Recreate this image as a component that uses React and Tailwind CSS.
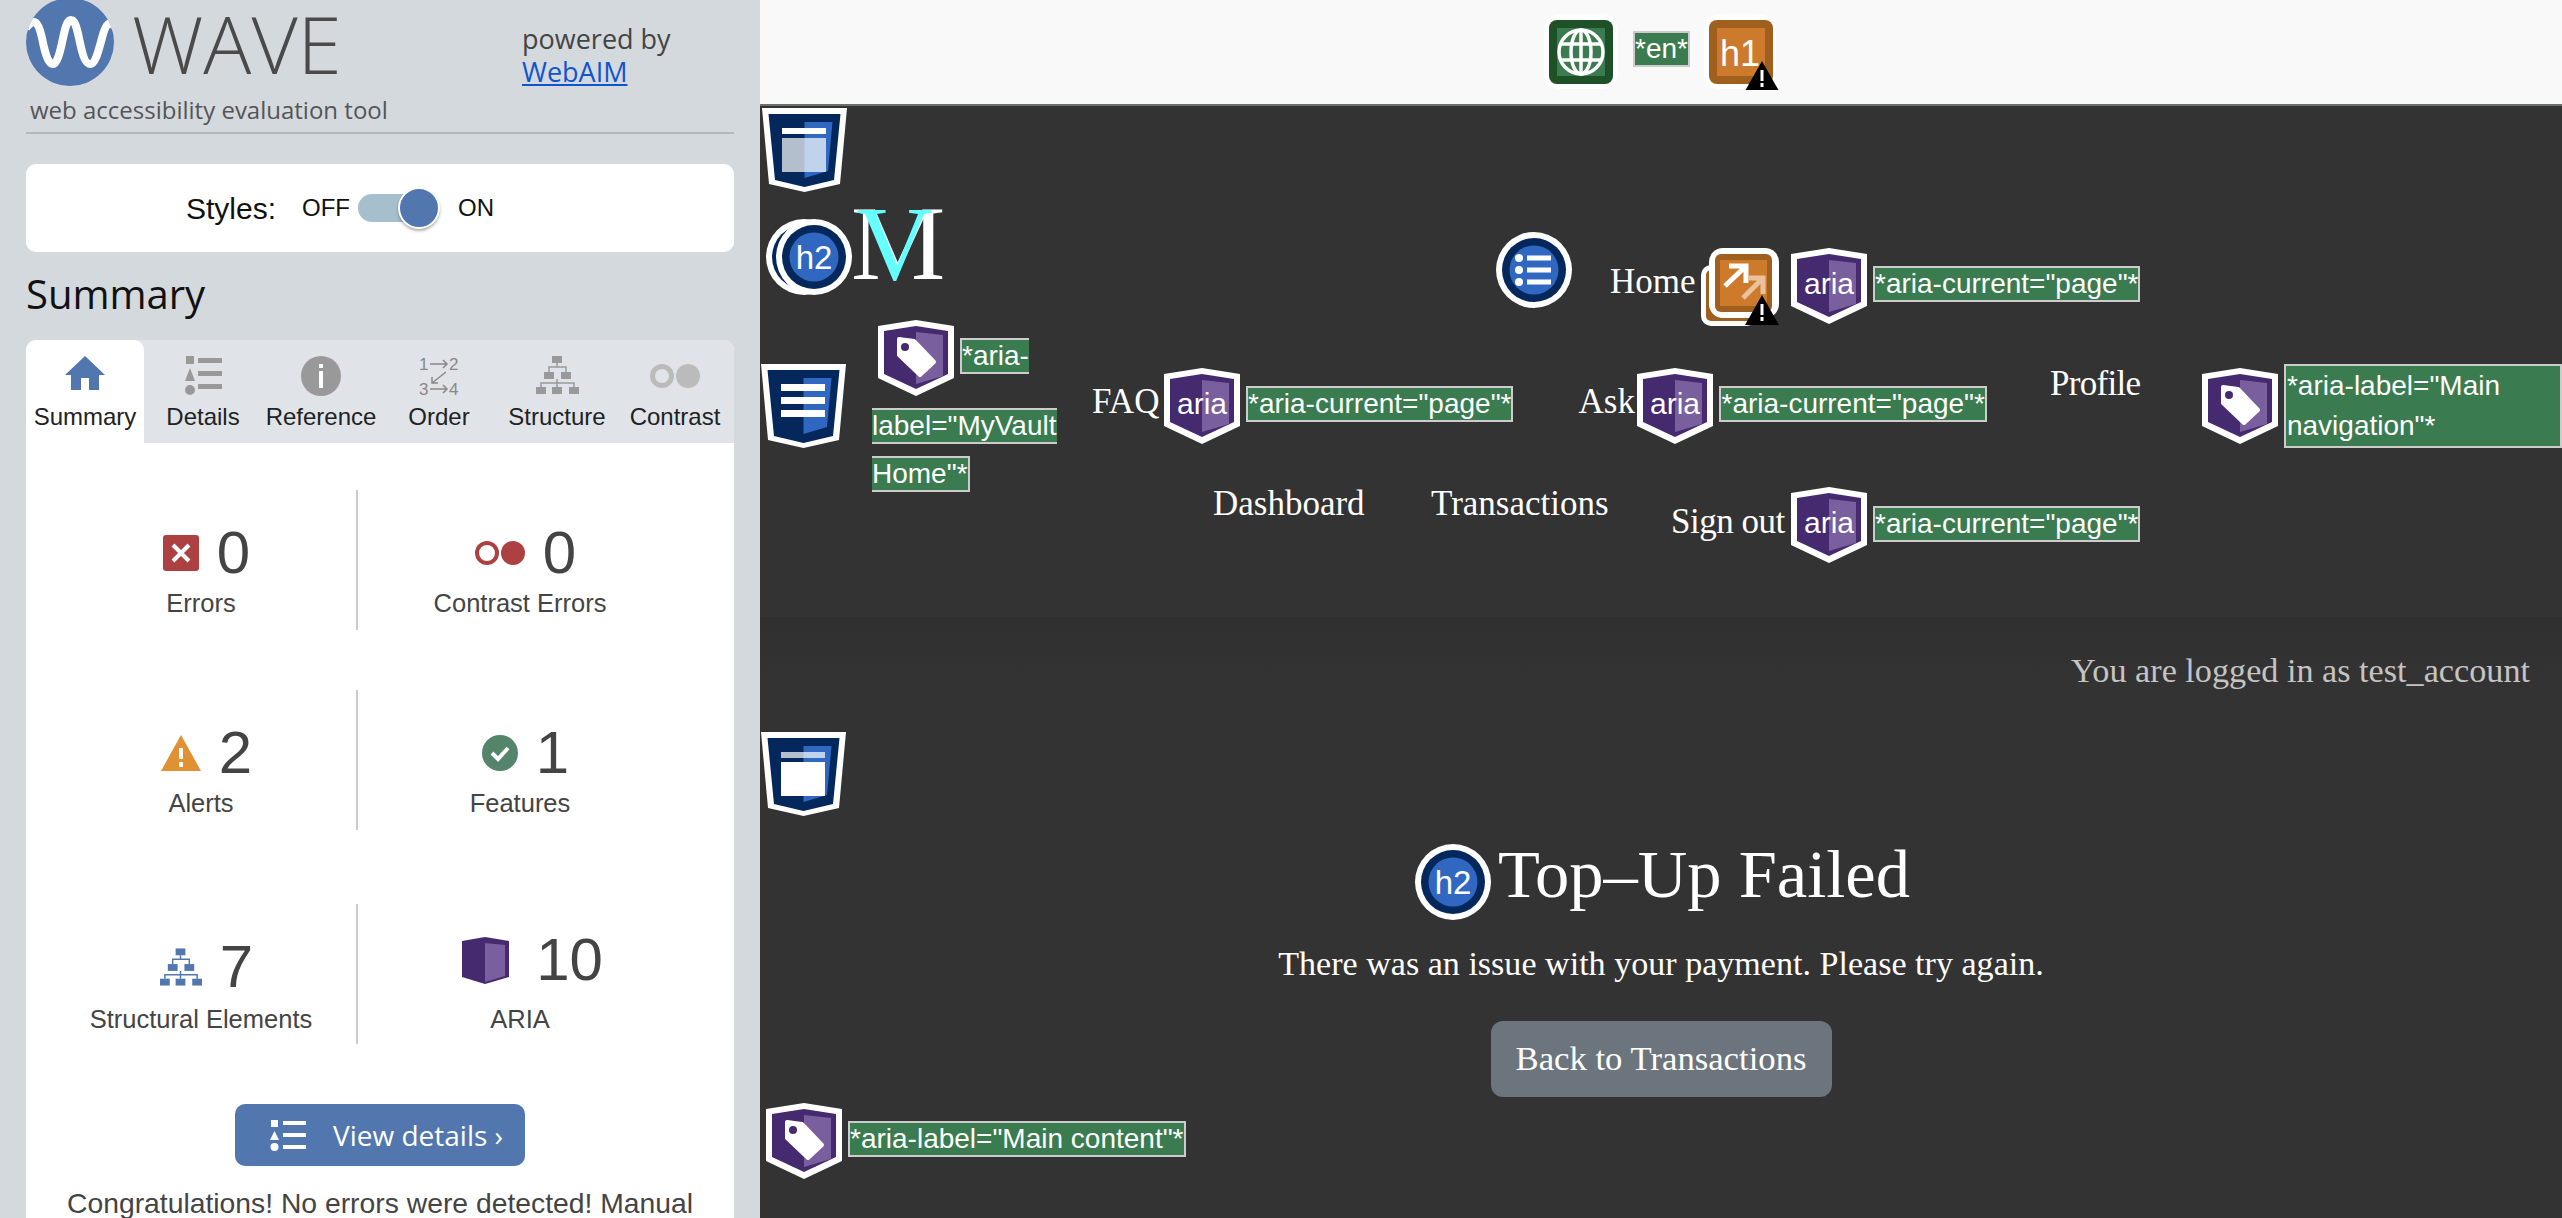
import React from 'react'

const sans = "font-['Liberation_Sans',sans-serif]"
const open = "font-['Open_Sans',sans-serif]"

function WaveLogo() {
  return (
    <svg width="88" height="88" viewBox="0 0 88 88" className="shrink-0 -mt-[2px]">
      <defs>
        <clipPath id="logoClip"><circle cx="44" cy="44" r="44" /></clipPath>
      </defs>
      <circle cx="44" cy="44" r="44" fill="#5177ae" />
      <path d="M0 30 C8 20 12 22 16 40 C20 60 23 66 27 66 C31 66 34 55 37 40 C40 26 42 22 45 22 C48 22 50 26 53 40 C56 55 59 66 64 66 C69 66 72 55 76 40 C80 24 84 22 90 30" fill="none" stroke="#fff" strokeWidth="8" clipPath="url(#logoClip)" />
    </svg>
  )
}

function Warn({ x = 41, y = 47 }) {
  return (
    <g transform={`translate(${x} ${y})`}>
      <path d="M17 0 L34 30 H0 Z" fill="#000" />
      <rect x="15.5" y="9" width="3" height="11" fill="#fff" />
      <rect x="15.5" y="22" width="3" height="4" fill="#fff" />
    </g>
  )
}

function Landmark({ children, className = '' }) {
  return (
    <svg width="85" height="84" viewBox="0 0 85 84" className={`shrink-0 ${className}`}>
      <path d="M0 0 H85 L78 76 L42.5 84 L7 76 Z" fill="#fff" />
      <path d="M6.500 6 H78.500 L72 72 L42.500 79 L13 72 Z" fill="#05285c" />
      <path d="M42.500 14 H70.500 L66 63 L42.500 70 Z" fill="#3068c1" />
      {children}
    </svg>
  )
}

function HeadingBadge({ x = 0 }) {
  return (
    <g transform={`translate(${x} 0)`}>
      <circle cx="38" cy="38" r="38" fill="#fff" />
      <circle cx="38" cy="38" r="32" fill="#05285c" />
      <circle cx="38" cy="38" r="24.500" fill="#3068c1" />
      <text x="38" y="50" textAnchor="middle" fontFamily="Liberation Sans" fontSize="33" fill="#fff">h2</text>
    </g>
  )
}

function H2Icon({ className = '' }) {
  return (
    <svg width="76" height="76" viewBox="0 0 76 76" className={`shrink-0 ${className}`}><HeadingBadge /></svg>
  )
}

function H2Stack({ className = '' }) {
  return (
    <svg width="87" height="76" viewBox="0 0 87 76" className={`shrink-0 ${className}`}>
      <HeadingBadge />
      <HeadingBadge x={10} />
    </svg>
  )
}

function ListIcon({ className = '' }) {
  return (
    <svg width="76" height="76" viewBox="0 0 76 76" className={`shrink-0 ${className}`}>
      <circle cx="38" cy="38" r="38" fill="#fff" />
      <circle cx="38" cy="38" r="32" fill="#05285c" />
      <circle cx="38" cy="38" r="24.500" fill="#3068c1" />
      <circle cx="23" cy="26" r="4" fill="#fff" />
      <circle cx="23" cy="38" r="4" fill="#fff" />
      <circle cx="23" cy="50" r="4" fill="#fff" />
      <rect x="31" y="23.500" width="24" height="5" fill="#fff" />
      <rect x="31" y="35.500" width="24" height="5" fill="#fff" />
      <rect x="31" y="47.500" width="24" height="5" fill="#fff" />
    </svg>
  )
}

function AriaShell({ children, className = '' }) {
  return (
    <svg width="76" height="76" viewBox="0 0 76 76" className={`shrink-0 ${className}`}>
      <path d="M0 6 L38 0 L76 6 V58 L38 76 L0 58 Z" fill="#fff" />
      <path d="M6 11 L38 6 L70 11 V54 L38 69 L6 54 Z" fill="#452a6f" />
      <path d="M38 12 L65 15 V56 L38 64 Z" fill="#7a5f9e" />
      {children}
    </svg>
  )
}

function AriaIcon({ className }) {
  return (
    <AriaShell className={className}>
      <text x="38" y="46" textAnchor="middle" fontFamily="Liberation Sans" fontSize="30" fill="#fff">aria</text>
    </AriaShell>
  )
}

function AriaTag({ className }) {
  return (
    <AriaShell className={className}>
      <path d="M21 19 L36 21 L56 42 L42 55 L21 35 Z" fill="#fff" stroke="#fff" strokeWidth="4" strokeLinejoin="round" />
      <circle cx="27" cy="27" r="4" fill="#452a6f" />
    </AriaShell>
  )
}

function LinkIcon({ className = '' }) {
  return (
    <svg width="78" height="78" viewBox="0 0 78 78" className={`shrink-0 ${className}`}>
      <rect x="0" y="17" width="56" height="61" rx="10" fill="#fff" />
      <rect x="5" y="22" width="50" height="51" rx="5" fill="#9f5f1f" />
      <rect x="8" y="0" width="70" height="70" rx="14" fill="#fff" />
      <rect x="14" y="6" width="57" height="58" rx="6" fill="#9f5f1f" />
      <rect x="19" y="12" width="47" height="46" fill="#cd7a2c" />
      <path d="M28 18 H45 V35 M45 18 L24 38" fill="none" stroke="#fff" strokeWidth="5" />
      <path d="M47 30 H62 V46 M62 30 L42 50" fill="none" stroke="#e9c29c" strokeWidth="5" />
      <Warn x={44} y={47} />
    </svg>
  )
}

function Tag({ children, className = '' }) {
  return (
    <span className={`block shrink-0 whitespace-nowrap border-2 border-[#ccc] bg-[#3a7b4f] text-[28px] leading-[32px] text-white ${sans} ${className}`}>
      {children}
    </span>
  )
}

function NavText({ children, className = '' }) {
  return (
    <span className={`block shrink-0 whitespace-nowrap text-[35px] leading-[40px] text-white ${className}`}>{children}</span>
  )
}

function TabIcon({ name }) {
  if (name === 'home') {
    return (
      <svg width="40" height="34" viewBox="0 0 40 34" className="mt-[16px]">
        <path d="M20 0 L40 19 H34 V34 H24 V22 H16 V34 H6 V19 H0 Z" fill="#5177ae" />
      </svg>
    )
  }
  if (name === 'details') {
    return (
      <svg width="37" height="40" viewBox="0 0 37 40" className="mt-[16px]">
        <rect x="1" y="0" width="8" height="8" fill="#999" />
        <path d="M5 12 L10 25 H0 Z" fill="#999" />
        <circle cx="5" cy="34" r="5" fill="#999" />
        <rect x="13" y="2" width="24" height="5" fill="#999" />
        <rect x="13" y="15" width="24" height="5" fill="#999" />
        <rect x="13" y="28" width="24" height="5" fill="#999" />
      </svg>
    )
  }
  if (name === 'reference') {
    return (
      <svg width="40" height="40" viewBox="0 0 40 40" className="mt-[16px]">
        <circle cx="20" cy="20" r="20" fill="#999" />
        <rect x="18" y="8" width="4" height="4" fill="#fff" />
        <rect x="18" y="15" width="4" height="17" fill="#fff" />
      </svg>
    )
  }
  if (name === 'order') {
    return (
      <svg width="40" height="40" viewBox="0 0 40 40" className="mt-[16px]">
        <g fontFamily="Liberation Sans" fontSize="17" fill="#888">
          <text x="0" y="14">1</text>
          <text x="30" y="14">2</text>
          <text x="0" y="39">3</text>
          <text x="30" y="39">4</text>
        </g>
        <path d="M11 8 H28 M24 4 L28 8 L24 12 M11 33 H28 M24 29 L28 33 L24 37 M27 16 L13 27 M13 21 V27 H19" fill="none" stroke="#888" strokeWidth="1.500" />
      </svg>
    )
  }
  if (name === 'structure') {
    return <StructureTree color="#999" className="mt-[16px]" width={43} height={38} />
  }
  return (
    <svg width="50" height="24" viewBox="0 0 50 24" className="mt-[24px]">
      <circle cx="12" cy="12" r="9.500" fill="none" stroke="#bbb" strokeWidth="5" />
      <circle cx="38" cy="12" r="12" fill="#bbb" />
    </svg>
  )
}

function StructureTree({ color, className = '', width, height }) {
  return (
    <svg width={width} height={height} viewBox="0 0 43 38" className={className}>
      <rect x="16" y="0" width="10" height="7" fill={color} />
      <rect x="8" y="16" width="10" height="7" fill={color} />
      <rect x="25" y="16" width="10" height="7" fill={color} />
      <rect x="0" y="31" width="10" height="7" fill={color} />
      <rect x="16" y="31" width="10" height="7" fill={color} />
      <rect x="33" y="31" width="10" height="7" fill={color} />
      <path d="M21 7 V11 M13 16 V11 H30 V16 M21 23 V27 M5 31 V27 H38 V31 M21 27 V31" fill="none" stroke={color} strokeWidth="1.500" />
    </svg>
  )
}

function Stat({ icon, n, label, gap = 'ml-[18px]', top = 'mt-[33px]', under = 'mt-[5px]', shift = 'ml-[11px]', className = '' }) {
  return (
    <div className={`flex h-[140px] flex-col items-center ${className}`}>
      <div className={`flex h-[60px] items-center ${top} ${shift}`}>
        {icon}
        <span className={`${gap} text-[60px] leading-[60px] text-[#444]`}>{n}</span>
      </div>
      <span className={`${under} whitespace-nowrap text-[25.500px] leading-[30px] text-[#444]`}>{label}</span>
    </div>
  )
}

const tabs = [
  { id: 'home', label: 'Summary' },
  { id: 'details', label: 'Details' },
  { id: 'reference', label: 'Reference' },
  { id: 'order', label: 'Order' },
  { id: 'structure', label: 'Structure' },
  { id: 'contrast', label: 'Contrast' },
]

function Sidebar() {
  return (
    <aside className={`flex h-full w-[760px] shrink-0 flex-col overflow-hidden bg-[#d4d9de] px-[26px] ${sans}`}>
      <div className="h-[134px] shrink-0 border-b-[2px] border-[#b3b8bd]">
        <div className="flex h-[86px]">
          <WaveLogo />
          <span className={`ml-[18px] w-[390px] text-[80px] leading-[86px] font-light text-[#4a4a4a] ${open}`}>WAVE</span>
          <div className={`pt-[22px] text-[27px] leading-[33px] text-[#444] ${open}`}>
            <div>powered by</div>
            <a href="#" className="text-[#1155cc] underline">WebAIM</a>
          </div>
        </div>
        <div className={`pl-[4px] pt-[8px] text-[24px] leading-[32px] text-[#555] ${open}`}>web accessibility evaluation tool</div>
      </div>

      <div className="mt-[30px] flex h-[88px] shrink-0 items-center rounded-[10px] bg-white pl-[160px] text-[#111]">
        <span className="text-[30px]">Styles:</span>
        <span className="ml-[26px] text-[24px]">OFF</span>
        <div className="ml-[8px] flex h-[40px] w-[82px] items-center">
          <div className="h-[28px] w-[60px] rounded-l-full bg-[#a5c0cc]" />
          <div className="-ml-[18px] h-[42px] w-[42px] shrink-0 rounded-full border-2 border-white bg-[#5177ae] shadow-[0_2px_3px_rgba(0,0,0,0.3)]" />
        </div>
        <span className="ml-[18px] text-[24px]">ON</span>
      </div>

      <h2 className={`mt-[16px] shrink-0 text-[40px] leading-[52px] text-[#111] ${open}`}>Summary</h2>

      <div className="mt-[20px] flex flex-1 shrink-0 flex-col rounded-t-[10px] bg-white">
        <div className="flex h-[103px] shrink-0 rounded-t-[10px] bg-[#e0e4e9]">
          {tabs.map((t, i) => (
            <div key={t.id} className={`flex w-[118px] flex-col items-center ${i === 0 ? 'rounded-t-[10px] bg-white' : ''}`}>
              <div className="h-[62px]"><TabIcon name={t.id} /></div>
              <span className="text-[24px] leading-[30px] text-[#222]">{t.label}</span>
            </div>
          ))}
        </div>

        <div className="ml-[20px] mt-[47px] shrink-0">
          <div className="flex">
            <Stat className="w-[312px] border-r-2 border-[#ccc]" n="0" label="Errors" icon={
              <svg width="36" height="36" viewBox="0 0 36 36">
                <rect width="36" height="36" rx="3" fill="#ad4040" />
                <path d="M10 10 L26 26 M26 10 L10 26" stroke="#fff" strokeWidth="4" />
              </svg>
            } />
            <Stat className="w-[324px]" n="0" label="Contrast Errors" icon={
              <svg width="50" height="24" viewBox="0 0 50 24">
                <circle cx="12" cy="12" r="10" fill="none" stroke="#ad4040" strokeWidth="4" />
                <circle cx="38" cy="12" r="12" fill="#ad4040" />
              </svg>
            } />
          </div>
          <div className="mt-[60px] flex">
            <Stat className="w-[312px] border-r-2 border-[#ccc]" n="2" label="Alerts" icon={
              <svg width="40" height="36" viewBox="0 0 40 36">
                <path d="M20 0 L40 36 H0 Z" fill="#df9133" />
                <rect x="18" y="13" width="4" height="11" fill="#fff" />
                <rect x="18" y="27" width="4" height="5" fill="#fff" />
              </svg>
            } />
            <Stat className="w-[324px]" n="1" label="Features" icon={
              <svg width="36" height="36" viewBox="0 0 36 36">
                <circle cx="18" cy="18" r="18" fill="#54846a" />
                <path d="M10 18 L16 24 L26 13" fill="none" stroke="#fff" strokeWidth="4" />
              </svg>
            } />
          </div>
          <div className="mt-[74px] flex">
            <Stat className="w-[312px] border-r-2 border-[#ccc]" n="7" label="Structural Elements" under="mt-[7px]" icon={<StructureTree color="#5177ae" width={42} height={38} />} />
            <Stat className="w-[324px]" n="10" gap="ml-[27px]" top="mt-[26px]" under="mt-[14px]" shift="ml-[25px]" label="ARIA" icon={
              <svg width="47" height="47" viewBox="0 0 47 47">
                <path d="M0 4 L23 0 L47 4 V40 L23 47 L0 40 Z" fill="#452a6f" />
                <path d="M23 6 L43 8 V39 L23 45 Z" fill="#7a5f9e" />
              </svg>
            } />
          </div>
        </div>

        <div className="mx-auto mt-[60px] flex h-[62px] w-[290px] shrink-0 items-center rounded-[10px] bg-[#5177ae] pl-[35px] text-white">
          <svg width="36" height="31" viewBox="0 0 36 31">
            <rect x="1" y="0" width="7" height="7" fill="#fff" />
            <path d="M4.500 11 L9 20 H0 Z" fill="#fff" />
            <circle cx="4.500" cy="27" r="4" fill="#fff" />
            <rect x="13" y="1" width="23" height="4" fill="#fff" />
            <rect x="13" y="13" width="23" height="4" fill="#fff" />
            <rect x="13" y="25" width="23" height="4" fill="#fff" />
          </svg>
          <span className={`ml-[27px] text-[28px] ${open}`}>View details ›</span>
        </div>

        <p className="mt-[19px] shrink-0 whitespace-nowrap text-center text-[28.300px] leading-[36px] text-[#444]">
          Congratulations! No errors were detected! Manual
        </p>
      </div>
    </aside>
  )
}

function Header() {
  return (
    <header className="h-[511px] shrink-0 bg-[#333] pt-[2px] font-['Liberation_Serif',serif]">
      <div className="flex h-[212px] items-start">
        <div className="w-[736px] shrink-0">
          <Landmark className="ml-[2px]">
            <rect x="20" y="20" width="44" height="6" fill="#fff" />
            <rect x="20" y="30" width="44" height="34" fill="#fff" opacity="0.7" />
          </Landmark>
          <div className="flex items-start">
            <H2Stack className="ml-[6px] mt-[27px]" />
            <div className="-ml-[2px] -mt-[1px] flex text-[106px] leading-none">
              <span className="text-white">M</span>
              <span className="-ml-[89px] text-[#6ff]">V</span>
            </div>
          </div>
        </div>
        <ListIcon className="mt-[124px]" />
        <NavText className="ml-[38px] mt-[154px] w-[91px]">Home</NavText>
        <LinkIcon className="mt-[140px]" />
        <AriaIcon className="ml-[12px] mt-[140px]" />
        <Tag className="ml-[6px] mt-[158px]">*aria-current="page"*</Tag>
      </div>

      <div className="flex h-[167px] items-start">
        <Landmark className="ml-[1px] mt-[44px]">
          <rect x="20" y="20" width="44" height="7" fill="#fff" />
          <rect x="20" y="33" width="44" height="7" fill="#fff" />
          <rect x="20" y="46" width="44" height="7" fill="#fff" />
        </Landmark>
        <div className="ml-[26px] w-[220px] shrink-0">
          <div className="flex items-start">
            <AriaTag className="ml-[6px]" />
            <Tag className="ml-[6px] mt-[18px] border-r-0">*aria-</Tag>
          </div>
          <Tag className="mt-[12px] w-fit border-x-0">label="MyVault</Tag>
          <Tag className="mt-[12px] w-fit border-l-0">Home"*</Tag>
        </div>
        <NavText className="mt-[62px] w-[72px]">FAQ</NavText>
        <AriaIcon className="mt-[48px]" />
        <Tag className="ml-[6px] mt-[66px]">*aria-current="page"*</Tag>
        <NavText className="ml-[65px] mt-[62px] w-[59px]">Ask</NavText>
        <AriaIcon className="mt-[48px]" />
        <Tag className="ml-[6px] mt-[66px]">*aria-current="page"*</Tag>
        <NavText className="ml-[63px] mt-[44px] w-[152px] tracking-[-0.7px]">Profile</NavText>
        <AriaTag className="mt-[48px]" />
        <div className={`ml-[6px] mt-[44px] h-[84px] flex-1 border-2 border-[#ccc] bg-[#3a7b4f] px-px text-[28px] leading-[40px] text-white ${sans}`}>
          *aria-label="Main<br />navigation"*
        </div>
      </div>

      <div className="flex items-start">
        <NavText className="ml-[453px] -mt-[3px] w-[218px]">Dashboard</NavText>
        <NavText className="-mt-[3px] w-[240px]">Transactions</NavText>
        <NavText className="mt-[15px] w-[120px] tracking-[-0.5px]">Sign out</NavText>
        <AriaIcon />
        <Tag className="ml-[6px] mt-[19px]">*aria-current="page"*</Tag>
      </div>
    </header>
  )
}

function MainArea() {
  return (
    <main className="flex-1 bg-[linear-gradient(#2f2f2f,#333_60px)] font-['Liberation_Serif',serif] text-white">
      <p className="pr-[32px] pt-[34px] text-right text-[34.200px] leading-[40px] text-[#c4c4c4]">You are logged in as test_account</p>
      <Landmark className="ml-px mt-[41px]">
        <rect x="20" y="20" width="44" height="6" fill="#fff" opacity="0.7" />
        <rect x="20" y="30" width="44" height="34" fill="#fff" />
      </Landmark>
      <div className="mt-[18px] flex justify-center pl-[3px]">
        <H2Icon className="mt-[10px]" />
        <h2 className="ml-[7px] text-[68.500px] leading-[80px]">Top–Up Failed</h2>
      </div>
      <p className="mt-[24px] text-center text-[34.100px] leading-[40px]">There was an issue with your payment. Please try again.</p>
      <div className="mx-auto mt-[37px] flex h-[76px] w-[341px] items-center justify-center rounded-[12px] bg-[#6c757d] text-[34.700px]">Back to Transactions</div>
      <div className="ml-[6px] mt-[6px] flex items-start">
        <AriaTag />
        <Tag className="ml-[6px] mt-[18px]">*aria-label="Main content"*</Tag>
      </div>
    </main>
  )
}

export default function App() {
  return (
    <div className="flex h-[1218px] w-[2562px] overflow-hidden bg-[#333]">
      <Sidebar />
      <div className="flex min-w-0 flex-1 flex-col">
        <div className="flex h-[106px] shrink-0 items-start border-b-[2px] border-[#6b7066] bg-[#f9f9f9] pl-[784px]">
          <svg width="74" height="75" viewBox="0 0 74 75" className="mt-[14px] shrink-0">
            <rect width="74" height="75" rx="16" fill="#fff" />
            <rect x="5" y="6" width="64" height="64" rx="8" fill="#1e5128" />
            <rect x="13" y="14" width="48" height="48" fill="#3a7b4f" />
            <g fill="none" stroke="#fff" strokeWidth="3.500">
              <circle cx="37" cy="38" r="22" />
              <ellipse cx="37" cy="38" rx="10" ry="22" />
              <path d="M37 16 V60 M17 30 H57 M17 46 H57" />
            </g>
          </svg>
          <Tag className="ml-[15px] mt-[31px]">*en*</Tag>
          <svg width="75" height="76" viewBox="0 0 75 76" className="ml-[14px] mt-[14px] shrink-0">
            <rect x="0" y="0" width="72" height="75" rx="16" fill="#fff" />
            <rect x="5" y="6" width="64" height="64" rx="8" fill="#9f5f1f" />
            <rect x="13" y="14" width="48" height="48" fill="#cd7a2c" />
            <text x="36" y="52" textAnchor="middle" fontFamily="Liberation Sans" fontSize="36" fill="#fff">h1</text>
            <Warn x={41} y={47} />
          </svg>
        </div>
        <Header />
        <MainArea />
      </div>
    </div>
  )
}
